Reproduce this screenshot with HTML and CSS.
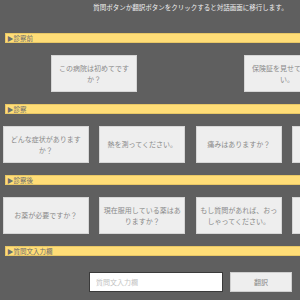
FILE: index.html
```html
<!DOCTYPE html>
<html lang="ja">
<head>
<meta charset="utf-8">
<link rel="stylesheet" href="styles.css">
</head>
<body>
<div class="page">
  <p class="notice">質問ボタンか翻訳ボタンをクリックすると対話画面に移行します。</p>
  <div class="bar">▶診察前</div>
  <div class="row row-wide">
    <button class="phrase">この病院は初めてですか？</button>
    <button class="phrase">保険証を見せてください。</button>
  </div>
  <div class="bar">▶診察</div>
  <div class="row">
    <button class="phrase">どんな症状がありますか？</button>
    <button class="phrase">熱を測ってください。</button>
    <button class="phrase">痛みはありますか？</button>
    <button class="phrase">どこが痛いですか？</button>
  </div>
  <div class="bar">▶診察後</div>
  <div class="row">
    <button class="phrase">お薬が必要ですか？</button>
    <button class="phrase">現在服用している薬はありますか？</button>
    <button class="phrase">もし質問があれば、おっしゃってください。</button>
    <button class="phrase">お大事に。</button>
  </div>
  <div class="bar">▶質問文入力欄</div>
  <div class="input-row">
    <input class="question" type="text" placeholder="質問文入力欄">
    <button class="translate">翻訳</button>
  </div>
</div>
</body>
</html>
```
FILE: styles.css
```css
html, body {
  margin: 0;
  padding: 0;
  overflow: hidden;
  background: #5f5f5f;
}
body {
  font-family: "Noto Sans CJK JP", "Noto Sans", sans-serif;
}
.page {
  width: 381px;
  display: flex;
  flex-direction: column;
  gap: 12px;
}
.notice {
  margin: 0 0 7px 0;
  font-size: 6.5px;
  line-height: 14px;
  color: #f2f2f2;
  text-align: center;
}
.bar {
  margin: 0 5px;
  height: 8px;
  line-height: 8px;
  border: 1px solid #e8c766;
  background: #ffdd77;
  color: #6e6e6e;
  font-size: 6.5px;
  padding-left: 1px;
}
.row {
  display: flex;
  justify-content: center;
  gap: 10.5px;
}
.row-wide {
  gap: 107px;
}
.phrase {
  flex: none;
  width: 86px;
  height: 37px;
  box-sizing: border-box;
  padding: 0 3px;
  border: 1px solid #d6d6d6;
  background: #eeeeee;
  color: #8a8a8a;
  font-family: inherit;
  font-size: 7px;
  line-height: 11px;
  text-align: center;
  border-radius: 0;
}
.input-row {
  margin-top: 4px;
  display: flex;
  justify-content: center;
  gap: 7px;
}
.question {
  width: 134px;
  height: 20px;
  box-sizing: border-box;
  margin: 0;
  padding: 0 6px;
  border: 1px solid #3a3a3a;
  background: #ffffff;
  font-family: inherit;
  font-size: 7px;
  color: #555;
  outline: none;
}
.question::placeholder {
  color: #c4c4c4;
}
.translate {
  width: 62px;
  height: 20px;
  box-sizing: border-box;
  margin: 0;
  border: 1px solid #cfcfcf;
  background: #eeeeee;
  color: #8a8a8a;
  font-family: inherit;
  font-size: 7px;
  border-radius: 0;
}
```
